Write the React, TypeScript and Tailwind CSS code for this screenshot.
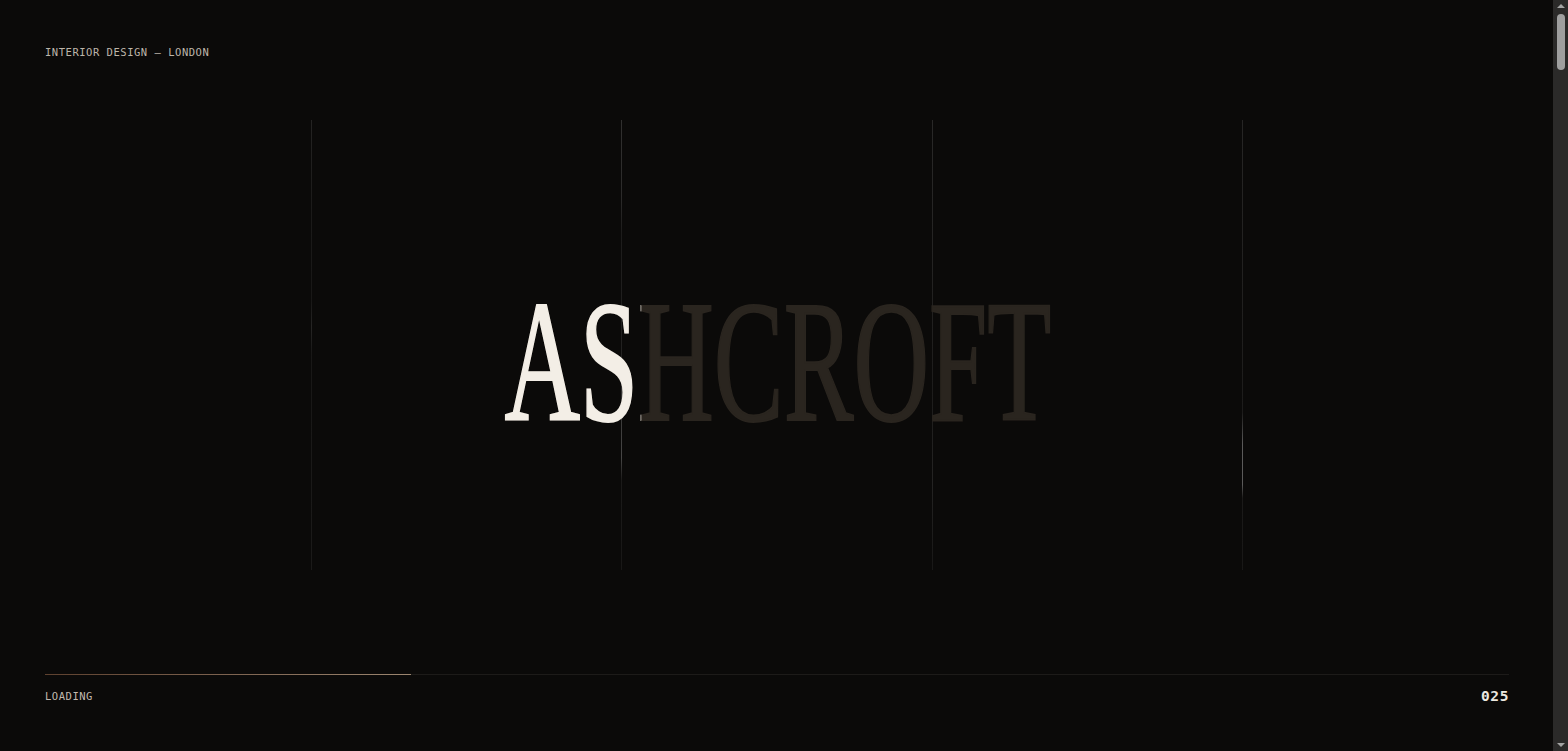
import React from "react"

const mono = { fontFamily: '"DejaVu Sans Mono", "Liberation Mono", monospace' }

function ScrollTrack() {
  return (
    <aside className="flex h-screen w-[15px] shrink-0 flex-col items-center justify-between bg-[#2b2a29]">
      <div className="flex w-full flex-col items-center">
        <div className="mt-[4px] h-0 w-0 border-x-[4px] border-b-[4px] border-x-transparent border-b-[#a3a3a3]" />
        <div className="mt-[6px] h-[56px] w-[8px] rounded-full bg-[#9f9f9f]" />
      </div>
      <div className="mb-[4px] h-0 w-0 border-x-[4px] border-t-[4px] border-x-transparent border-t-[#a3a3a3]" />
    </aside>
  )
}

export default function App() {
  const progress = 25

  return (
    <div className="flex h-screen w-full overflow-hidden bg-[#0b0a09]">
      {/* Loader screen */}
      <section className="relative flex h-screen min-w-0 flex-1 flex-col overflow-hidden">
        {/* Guide lines */}
        <div className="pointer-events-none absolute left-0 right-0 top-[120px] h-[450px] grid grid-cols-5">
          <div />
          <div className="border-l border-[#141312] relative">
            <div className="absolute -left-px top-0 h-full w-px bg-[linear-gradient(to_bottom,rgba(255,255,255,0.07)_0%,rgba(255,255,255,0.03)_20%,rgba(255,255,255,0.02)_40%,rgba(255,255,255,0.08)_46%,rgba(255,255,255,0.02)_52%,rgba(255,255,255,0.03)_100%)]" />
          </div>
          <div className="border-l border-[#141312] relative">
            <div className="absolute -left-px top-0 h-full w-px bg-[linear-gradient(to_bottom,rgba(255,255,255,0.12)_0%,rgba(255,255,255,0.1)_17%,rgba(255,255,255,0.04)_25%,rgba(255,255,255,0.06)_50%,rgba(255,255,255,0.22)_75%,rgba(255,255,255,0.03)_80%,rgba(255,255,255,0.02)_100%)]" />
          </div>
          <div className="border-l border-[#141312] relative">
            <div className="absolute -left-px top-0 h-full w-px bg-[linear-gradient(to_bottom,rgba(255,255,255,0.09)_0%,rgba(255,255,255,0.07)_30%,rgba(255,255,255,0.04)_60%,rgba(255,255,255,0.07)_80%,rgba(255,255,255,0.02)_100%)]" />
          </div>
          <div className="border-l border-[#141312] relative">
            <div className="absolute -left-px top-0 h-full w-px bg-[linear-gradient(to_bottom,rgba(255,255,255,0.08)_0%,rgba(255,255,255,0.06)_35%,rgba(255,255,255,0.04)_65%,rgba(255,255,255,0.3)_72%,rgba(255,255,255,0.3)_81%,rgba(255,255,255,0.03)_84%,rgba(255,255,255,0.02)_100%)]" />
          </div>
        </div>

        {/* Top label */}
        <header className="relative pl-[45px] pr-[44px] pt-[45px]">
          <p className="text-[10.5px] leading-[14px] tracking-[0.05em] text-[#bdb5aa] uppercase" style={mono}>
            Interior Design — London
          </p>
        </header>

        {/* Wordmark */}
        <div className="relative flex flex-1 items-center justify-center pb-[10px] pl-[3px]">
          <div
            className="relative inline-block scale-x-[0.605] text-[173px] leading-none select-none [-webkit-text-stroke:2px_currentColor]"
            style={{ fontFamily: '"Liberation Serif", "Times New Roman", serif' }}
          >
            <span className="block text-[#2a251f]">ASHCROFT</span>
            <span className="absolute inset-0 block text-[#f3eee6] [clip-path:inset(0_75%_0_0)]">ASHCROFT</span>
          </div>
        </div>

        {/* Progress */}
        <footer className="relative pl-[45px] pr-[44px] pb-[44px]">
          <div className="h-px w-full bg-[#1d1b19]">
            <div
              className="h-px bg-gradient-to-r from-[#5e412f] via-[#7d6350] to-[#9c8670]"
              style={{ width: `${progress}%` }}
            />
          </div>
          <div className="mt-[12px] flex h-[20px] items-center justify-between" style={mono}>
            <span className="text-[10.5px] tracking-[0.05em] text-[#c2bab0] uppercase">Loading</span>
            <span className="text-[14.5px] font-semibold tracking-[0.04em] text-[#ece8e0]">
              {String(progress).padStart(3, "0")}
            </span>
          </div>
        </footer>
      </section>

      <ScrollTrack />
    </div>
  )
}
